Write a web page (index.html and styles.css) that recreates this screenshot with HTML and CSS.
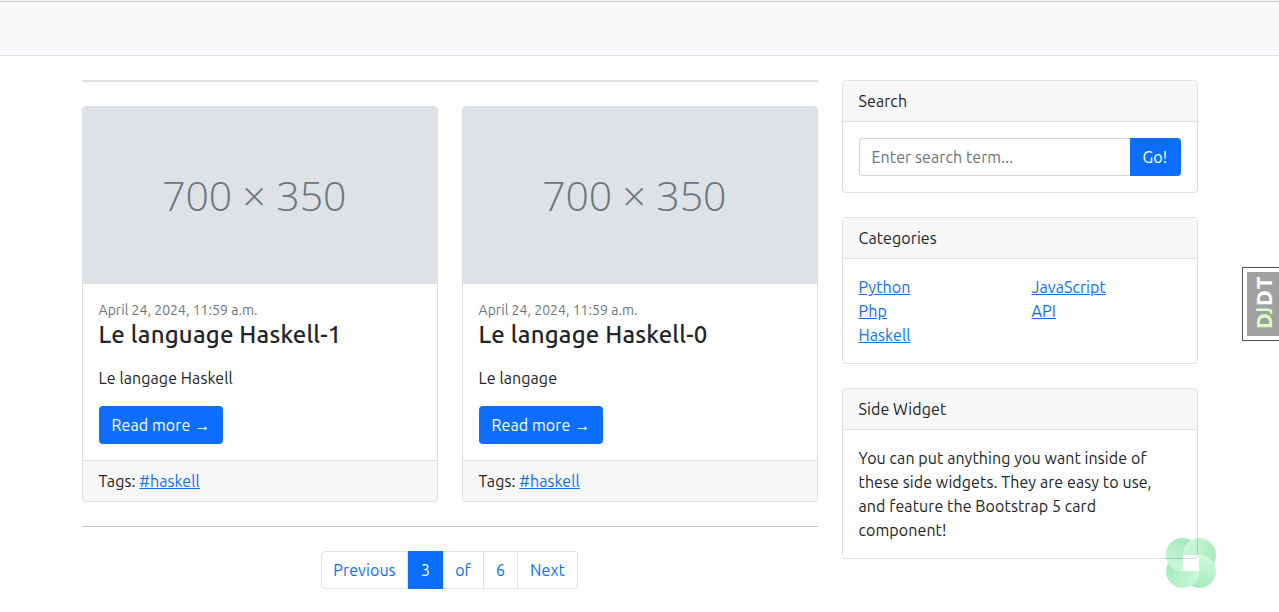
FILE: index.html
```html
<!DOCTYPE html>
<html lang="en">
<head>
<meta charset="utf-8">
<title>Blog</title>
<link rel="stylesheet" href="styles.css">
</head>
<body>
<header class="navbar"></header>
<div class="container">
  <main class="posts">
    <div class="rule-top"></div>
    <div class="post-row">
      <article class="card">
        <svg class="card-image" viewBox="0 0 354 177"><rect width="354" height="177" fill="#dee2e6"/><text class="placeholder" x="79.3" y="103.5" textLength="184">700 × 350</text></svg>
        <div class="card-body">
          <div class="date">April 24, 2024, 11:59 a.m.</div>
          <h2 class="title">Le language Haskell-1</h2>
          <p class="summary">Le langage Haskell</p>
          <a class="btn read-more">Read more <span class="arrow">→</span></a>
        </div>
        <div class="card-footer">Tags: <a class="link" href="#">#haskell</a></div>
      </article>
      <article class="card">
        <svg class="card-image" viewBox="0 0 354 177"><rect width="354" height="177" fill="#dee2e6"/><text class="placeholder" x="79.3" y="103.5" textLength="184">700 × 350</text></svg>
        <div class="card-body">
          <div class="date">April 24, 2024, 11:59 a.m.</div>
          <h2 class="title">Le langage Haskell-0</h2>
          <p class="summary">Le langage</p>
          <a class="btn read-more">Read more <span class="arrow">→</span></a>
        </div>
        <div class="card-footer">Tags: <a class="link" href="#">#haskell</a></div>
      </article>
    </div>
    <div class="rule"></div>
    <nav class="pagination">
      <a class="page prev">Previous</a>
      <a class="page active">3</a>
      <a class="page of">of</a>
      <a class="page last">6</a>
      <a class="page next">Next</a>
    </nav>
  </main>
  <aside class="sidebar">
    <section class="card">
      <div class="card-header">Search</div>
      <div class="card-body search">
        <input class="search-input" type="text" placeholder="Enter search term...">
        <button class="btn go">Go!</button>
      </div>
    </section>
    <section class="card">
      <div class="card-header">Categories</div>
      <div class="card-body categories">
        <div class="category-list">
          <a class="link" href="#">Python</a>
          <a class="link" href="#">Php</a>
          <a class="link" href="#">Haskell</a>
        </div>
        <div class="category-list">
          <a class="link" href="#">JavaScript</a>
          <a class="link" href="#">API</a>
        </div>
      </div>
    </section>
    <section class="card">
      <div class="card-header">Side Widget</div>
      <div class="card-body">You can put anything you want inside of<br>these side widgets. They are easy to use,<br>and feature the Bootstrap 5 card<br>component!</div>
    </section>
  </aside>
</div>
<div class="debug-handle"><div class="debug-inner"><span class="debug-text"><span class="green">D<span class="small-j">J</span></span>DT</span></div></div>
<svg class="badge" viewBox="0 0 50 50">
  <defs>
    <linearGradient id="a" x1="0.7" y1="0" x2="0.4" y2="1"><stop offset="0" stop-color="#a2e8b9"/><stop offset="1" stop-color="#cdf9db"/></linearGradient>
    <linearGradient id="b" x1="0" y1="0.3" x2="1" y2="0.7"><stop offset="0" stop-color="#cffadc"/><stop offset="1" stop-color="#a5e9bb"/></linearGradient>
    <linearGradient id="c" x1="0.3" y1="1" x2="0.6" y2="0"><stop offset="0" stop-color="#a4e9bb"/><stop offset="1" stop-color="#cffadc"/></linearGradient>
    <linearGradient id="d" x1="1" y1="0.7" x2="0" y2="0.3"><stop offset="0" stop-color="#cdf9db"/><stop offset="1" stop-color="#a2e8b9"/></linearGradient>
    <clipPath id="left"><rect width="17.5" height="50"/></clipPath>
  </defs>
  <circle cx="16.7" cy="16.7" r="16.7" fill="url(#a)"/>
  <circle cx="33.3" cy="16.7" r="16.7" fill="url(#b)"/>
  <circle cx="33.3" cy="33.3" r="16.7" fill="url(#c)"/>
  <circle cx="16.7" cy="33.3" r="16.7" fill="url(#d)"/>
  <circle cx="16.7" cy="16.7" r="16.7" fill="url(#a)" clip-path="url(#left)"/>
  <path d="M17 17H33V33H17Z" fill="#fff"/>
  <path d="M0 20.5H28Q31.5 20.5 31.5 17V0" fill="none" stroke="#000" stroke-opacity=".15"/>
</svg>
</body>
</html>
```
FILE: styles.css
```css
* { box-sizing: border-box; }
body {
  margin: 0;
  height: 612px;
  overflow: hidden;
  background: #fff;
  color: #212529;
  font: 16px/24px Ubuntu, "Noto Sans", sans-serif;
  letter-spacing: 0.09px;
}
.navbar {
  height: 56px;
  margin-bottom: 24px;
  background: linear-gradient(#f8f9fa 1px, #c7c8c9 1px, #c7c8c9 2px, #f8f9fa 2px);
  border-bottom: 1px solid #dee2e6;
}
.container {
  display: grid;
  grid-template-columns: 736px 356px;
  column-gap: 24px;
  padding-left: 81.5px;
}
.rule-top { height: 2px; margin-bottom: 24px; background: #dfdfdf; }
.post-row { display: grid; grid-template-columns: 356px 356px; gap: 24px; }
.card { border: 1px solid #dfdfdf; border-radius: 4px; background: #fff; overflow: hidden; }
.card-image { display: block; width: 354px; height: 177px; }
.post-row .card { border-top-color: #dee2e6; }
.placeholder { font: 300 41px "Open Sans", "Noto Sans", sans-serif; fill: #6c757d; letter-spacing: 0; }
.card-body { padding: 16px; }
.date { font-size: 14px; line-height: 21px; color: #6c757d; letter-spacing: 0.04px; }
.title { margin: 0 0 16px; font-size: 24px; line-height: 28.8px; font-weight: 500; letter-spacing: 0.19px; }
.summary { margin: 0 0 16px; }
.btn {
  display: block;
  height: 38px;
  padding: 7px 0 7px 13px;
  border: 0;
  border-radius: 4px;
  background: #0d6efd;
  color: #fff;
  font: inherit;
  letter-spacing: inherit;
  text-align: left;
  white-space: nowrap;
}
.read-more { width: 124px; }
.arrow { font-family: "Liberation Sans", sans-serif; line-height: 1; }
.card-footer { height: 41px; padding: 8px 16px; border-top: 1px solid #dfdfdf; background: #f7f7f7; }
.link { color: #0d6efd; text-decoration: underline; }
.rule { height: 1px; margin: 24px 0; background: #c7c8c9; }
.pagination { display: flex; justify-content: center; height: 38px; margin-right: 1px; }
.page { padding: 6px 0 6px 1px; border: 1px solid #dee2e6; border-left-width: 0; color: #0d6efd; text-align: center; }
.prev { width: 87px; border-left-width: 1px; border-radius: 4px 0 0 4px; }
.active { width: 35px; padding-left: 2px; background: #0d6efd; border-color: #0d6efd; color: #fff; }
.of { width: 41px; }
.last { width: 34px; }
.next { width: 60px; border-radius: 0 4px 4px 0; }
.sidebar { display: flex; flex-direction: column; gap: 24px; }
.card-header { height: 41px; padding: 8px 16px; border-bottom: 1px solid #dfdfdf; background: #f7f7f7; }
.search { display: flex; }
.search-input {
  flex: 1;
  min-width: 0;
  height: 38px;
  padding: 6px 12px;
  border: 1px solid #ced4da;
  border-right: 0;
  border-radius: 4px 0 0 4px;
  font: inherit;
  letter-spacing: inherit;
}
.search-input::placeholder { color: #6c757d; opacity: 1; }
.go { width: 51px; border-radius: 0 4px 4px 0; }
.categories { display: grid; grid-template-columns: 173px 1fr; }
.category-list { display: flex; flex-direction: column; align-items: flex-start; }
.debug-handle {
  position: absolute;
  top: 267px;
  right: 0;
  width: 37px;
  height: 74px;
  padding: 4px 0 4px 4px;
  border: 1px solid #555;
  border-right: 0;
  background: #fff;
}
.debug-inner { display: flex; align-items: center; justify-content: center; height: 64px; background: #a0a0a0; }
.debug-text {
  writing-mode: vertical-rl;
  transform: translate(0, -1px) rotate(180deg);
  font: 700 22px/24px "Open Sans", sans-serif;
  letter-spacing: 0.6px;
  color: #fff;
}
.green { color: #dcfcc4; }
.small-j { font-size: 17px; }
.badge { position: absolute; left: 1166px; top: 538px; width: 50px; height: 50px; }
```
